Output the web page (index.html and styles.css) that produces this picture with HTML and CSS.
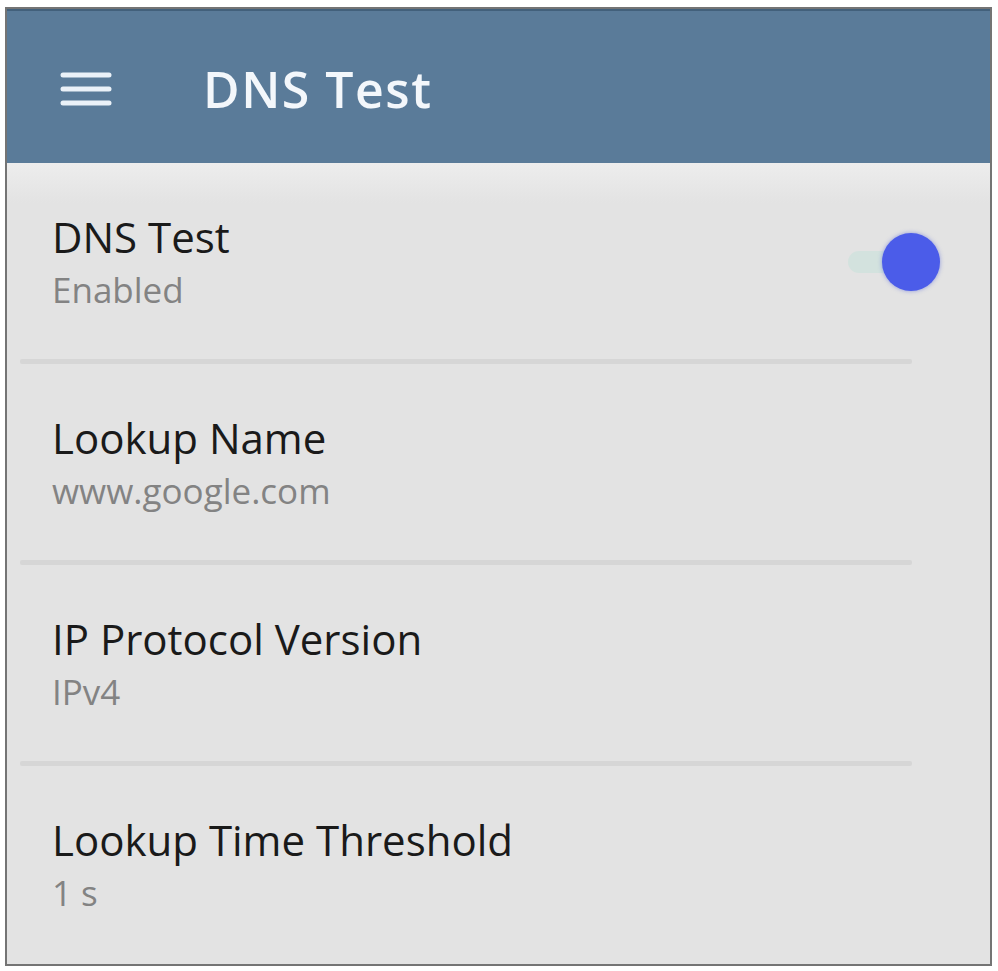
FILE: index.html
```html
<!DOCTYPE html>
<html lang="en">
<head>
<meta charset="utf-8">
<title>DNS Test</title>
<link rel="stylesheet" href="styles.css">
</head>
<body>
<div class="frame">
  <header class="appbar">
    <svg class="menu-icon" width="52" height="36" viewBox="0 0 52 36" aria-hidden="true">
      <line x1="3" y1="4" x2="49" y2="4"/>
      <line x1="3" y1="18" x2="49" y2="18"/>
      <line x1="3" y1="32" x2="49" y2="32"/>
    </svg>
    <h1 class="appbar-title">DNS Test</h1>
  </header>
  <main class="list">
    <div class="item">
      <div class="item-row">
        <div class="item-text">
          <div class="item-title">DNS Test</div>
          <div class="item-sub">Enabled</div>
        </div>
        <div class="switch">
          <span class="switch-track"></span>
          <span class="switch-thumb"></span>
        </div>
      </div>
      <div class="divider"></div>
    </div>
    <div class="item">
      <div class="item-row">
        <div class="item-text">
          <div class="item-title">Lookup Name</div>
          <div class="item-sub">www.google.com</div>
        </div>
      </div>
      <div class="divider"></div>
    </div>
    <div class="item">
      <div class="item-row">
        <div class="item-text">
          <div class="item-title">IP Protocol Version</div>
          <div class="item-sub">IPv4</div>
        </div>
      </div>
      <div class="divider"></div>
    </div>
    <div class="item item-last">
      <div class="item-row">
        <div class="item-text">
          <div class="item-title">Lookup Time Threshold</div>
          <div class="item-sub">1 s</div>
        </div>
      </div>
    </div>
  </main>
</div>
</body>
</html>
```
FILE: styles.css
```css
* {
  box-sizing: border-box;
}

html, body {
  margin: 0;
  padding: 0;
  background: #ffffff;
}

body {
  font-family: "Open Sans", "Noto Sans", "Liberation Sans", sans-serif;
}

.frame {
  width: 987px;
  height: 959px;
  margin: 7px 0 0 5px;
  border: 2px solid #747474;
  background: #e3e3e3;
  display: flex;
  flex-direction: column;
  overflow: hidden;
}

.appbar {
  height: 154px;
  flex: none;
  background: #5a7b99;
  border-top: 2px solid #42607b;
  display: flex;
  align-items: center;
  padding: 4px 0 0 53px;
}

.menu-icon {
  flex: none;
  stroke: #eaf1f8;
  stroke-width: 5;
  stroke-linecap: round;
}

.appbar-title {
  margin: 0 0 0 91px;
  font-size: 50px;
  font-weight: 600;
  color: #f3f7fb;
  line-height: 60px;
  letter-spacing: 1.5px;
}

.list {
  flex: 1;
  display: flex;
  flex-direction: column;
  background: linear-gradient(#ededed, #e3e3e3 40px);
}

.item {
  height: 201px;
  flex: none;
  display: flex;
  flex-direction: column;
}

.item-last {
  flex: 1;
}

.item-row {
  flex: 1;
  display: flex;
  align-items: flex-start;
  padding: 49px 50px 0 45px;
}

.item-text {
  flex: 1;
  display: flex;
  flex-direction: column;
}

.item-title {
  font-size: 42px;
  line-height: 50px;
  color: #1a1a1a;
}

.item-sub {
  margin-top: 7px;
  font-size: 35px;
  line-height: 42px;
  color: #838383;
}

.switch {
  position: relative;
  flex: none;
  width: 96px;
  height: 60px;
  margin-top: 20px;
}

.switch-track {
  position: absolute;
  left: 4px;
  right: 20px;
  top: 19px;
  height: 22px;
  border-radius: 11px;
  background: #d3e2de;
}

.switch-thumb {
  position: absolute;
  right: 0;
  top: 1px;
  width: 58px;
  height: 58px;
  border-radius: 50%;
  background: #4b5ce9;
  box-shadow: 0 0 4px rgba(60, 80, 220, 0.5);
}

.divider {
  height: 5px;
  flex: none;
  margin: 0 78px 0 13px;
  background: #d6d6d6;
  border-radius: 2px;
}
```
